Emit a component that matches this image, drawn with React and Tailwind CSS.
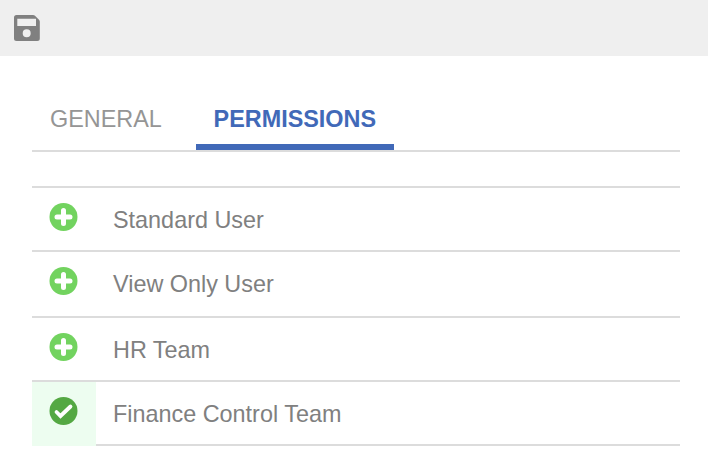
const ROWS = [
  { name: 'Standard User', height: 'h-[64px]' },
  { name: 'View Only User', height: 'h-[66px]' },
  { name: 'HR Team', height: 'h-[64px]' },
  { name: 'Finance Control Team', height: 'h-[64px]', added: true },
]

function SaveIcon() {
  return (
    <svg width="26" height="26" viewBox="0 0 26 26">
      <path
        fill="#808080"
        fillRule="evenodd"
        d="M2.5 0h16.5q1.2 0 2 .8l4 4q.8.8.8 2V23.5a2.5 2.5 0 0 1-2.5 2.5H2.5A2.5 2.5 0 0 1 0 23.5V2.5A2.5 2.5 0 0 1 2.5 0zM3.3 3.7V11H22V3.7zM12.7 14.3a4 4 0 1 0 0 8 4 4 0 0 0 0-8z"
      />
    </svg>
  )
}

function PlusIcon() {
  return (
    <svg width="29" height="28" viewBox="-0.5 0 29 28">
      <circle cx="14" cy="14" r="14" fill="#72d35f" />
      <path d="M14 7.500v13M7.500 14h13" stroke="#fff" strokeWidth="5" strokeLinecap="round" />
    </svg>
  )
}

function CheckIcon() {
  return (
    <svg width="29" height="28" viewBox="-0.5 0 29 28">
      <circle cx="14" cy="14" r="14" fill="#54a843" />
      <path d="M7 15l4 4L21 9.500" fill="none" stroke="#fff" strokeWidth="3.800" strokeLinecap="round" />
    </svg>
  )
}

export default function App() {
  return (
    <div className="w-[708px] h-[470px] bg-white font-['Liberation_Sans',sans-serif] text-[23.4px] overflow-hidden">
      <div className="h-14 bg-[#efefef] flex items-center pl-[14px]">
        <SaveIcon />
      </div>

      <div className="ml-8 w-[648px] mt-[34px]">
        <div className="flex h-[62px] border-b-2 border-[#dcdcdc]">
          <div className="pl-[18px] pr-[34px] pt-[12px] text-[#959595]">GENERAL</div>
          <div className="w-[198px] text-center pt-[12px] font-bold text-[#4169b8] border-b-[6px] border-[#4169b8]">PERMISSIONS</div>
        </div>

        <div className="mt-[34px] border-t-2 border-[#dcdcdc]">
          {ROWS.map(row => (
            <div key={row.name} className={`flex border-b-2 border-[#dcdcdc] ${row.height}`}>
              <div className={`w-16 pl-[17px] pt-[15px] ${row.added ? 'bg-[#edfdf0] h-[64px] shrink-0 relative' : ''}`}>
                {row.added ? <CheckIcon /> : <PlusIcon />}
              </div>
              <div className="pl-[17px] flex-1 pt-[14.500px] text-[#808080]">{row.name}</div>
            </div>
          ))}
        </div>
      </div>
    </div>
  )
}
